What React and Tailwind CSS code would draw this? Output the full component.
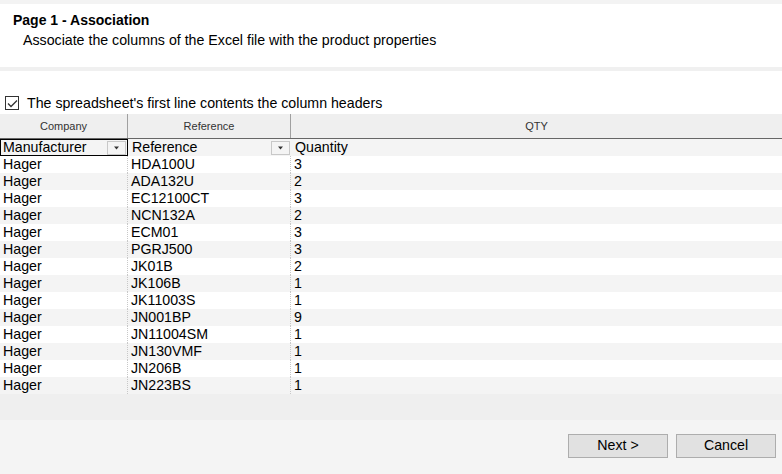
const ROWS = [
  ['Hager', 'HDA100U', '3'],
  ['Hager', 'ADA132U', '2'],
  ['Hager', 'EC12100CT', '3'],
  ['Hager', 'NCN132A', '2'],
  ['Hager', 'ECM01', '3'],
  ['Hager', 'PGRJ500', '3'],
  ['Hager', 'JK01B', '2'],
  ['Hager', 'JK106B', '1'],
  ['Hager', 'JK11003S', '1'],
  ['Hager', 'JN001BP', '9'],
  ['Hager', 'JN11004SM', '1'],
  ['Hager', 'JN130VMF', '1'],
  ['Hager', 'JN206B', '1'],
  ['Hager', 'JN223BS', '1'],
]

function DropArrow() {
  return (
    <div className="flex h-[14px] w-[19px] items-center justify-center border border-[#c8c8c8] bg-[#f4f4f4]">
      <svg width="7" height="4" viewBox="0 0 7 4">
        <path d="M1 0.5h5L3.5 3.5z" fill="#333" />
      </svg>
    </div>
  )
}

export default function App() {
  return (
    <div
      className="flex h-[474px] w-[782px] flex-col overflow-hidden bg-white text-black"
      style={{ fontFamily: '"Liberation Sans", Arial, sans-serif' }}
    >
      {/* Header */}
      <div className="h-[4px] bg-[#f3f3f3]" />
      <div className="h-[63px] bg-white pl-[13px] pt-[7px]">
        <div className="text-[14px] leading-[18px] font-bold">Page 1 - Association</div>
        <div className="pl-[10px] pt-[3px] text-[14.2px] leading-[16px]">
          Associate the columns of the Excel file with the product properties
        </div>
      </div>
      <div className="h-[4px] bg-[#f0f0f0]" />

      {/* Checkbox */}
      <div className="flex h-[43px] items-end pb-[3px] pl-[5px]">
        <div className="flex items-center gap-[8px]">
          <div className="flex h-[14px] w-[14px] items-center justify-center border border-[#333]">
            <svg width="11" height="9" viewBox="0 0 11 9">
              <path d="M1 4.5l3 3L10 1.5" fill="none" stroke="#333" strokeWidth="1.3" />
            </svg>
          </div>
          <span className="text-[14.2px] leading-[16px]">The spreadsheet's first line contents the column headers</span>
        </div>
      </div>

      {/* Grid */}
      <div className="flex flex-col">
        <div className="flex h-[25px] border-b border-[#666] bg-[#efefef] text-[11px] text-[#333]">
          <div className="flex w-[128px] items-center justify-center border-r border-[#a0a0a0]">Company</div>
          <div className="flex w-[163px] items-center justify-center border-r border-[#a0a0a0]">Reference</div>
          <div className="flex flex-1 items-center justify-center">QTY</div>
        </div>
        <div className="flex h-[17px] bg-[#f4f4f4] text-[14.2px] leading-[15px]">
          <div className="flex w-[128px] items-center justify-between border border-black pl-[2px] pr-[1px]">
            <span>Manufacturer</span>
            <DropArrow />
          </div>
          <div className="flex w-[163px] items-center justify-between pl-[4px] pr-[1px]">
            <span>Reference</span>
            <DropArrow />
          </div>
          <div className="flex flex-1 items-center pl-[4px]">Quantity</div>
        </div>
        {ROWS.map((r, i) => (
          <div
            key={i}
            className={`flex h-[17px] text-[14.2px] leading-[17px] ${i % 2 === 1 ? 'bg-[#f4f4f4]' : 'bg-white'}`}
          >
            <div className="w-[128px] border-r border-dotted border-[#c8c8c8] pl-[3px]">{r[0]}</div>
            <div className="w-[163px] border-r border-dotted border-[#c8c8c8] pl-[3px]">{r[1]}</div>
            <div className="flex-1 pl-[3px]">{r[2]}</div>
          </div>
        ))}
      </div>

      <div className="h-[26px] bg-[#efefef]" />

      {/* Footer */}
      <div className="flex flex-1 items-start justify-end gap-[8px] bg-[#f4f4f4] pr-[6px] pt-[14px]">
        <button className="h-[24px] w-[100px] border border-[#adadad] bg-[#e1e1e1] text-[14.2px]">Next &gt;</button>
        <button className="h-[24px] w-[100px] border border-[#adadad] bg-[#e1e1e1] text-[14.2px]">Cancel</button>
      </div>
    </div>
  )
}
